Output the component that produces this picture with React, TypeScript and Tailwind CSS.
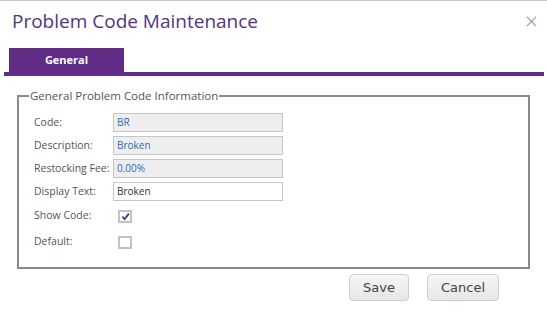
import React from 'react';

const FONT = { fontFamily: '"Open Sans", "Noto Sans", Arial, sans-serif' };

type Field = { label: string; value: string; readOnly: boolean };

const FIELDS: Field[] = [
  { label: 'Code:', value: 'BR', readOnly: true },
  { label: 'Description:', value: 'Broken', readOnly: true },
  { label: 'Restocking Fee:', value: '0.00%', readOnly: true },
  { label: 'Display Text:', value: 'Broken', readOnly: false },
];

function Checkbox({ checked }: { checked: boolean }) {
  return (
    <span className="ml-[5px] flex h-[13px] w-[14px] items-center justify-center border-2 border-[#c2c2c2] bg-white">
      {checked && (
        <svg viewBox="0 0 10 10" className="h-[9px] w-[9px]">
          <path d="M1.5 5.2 L4 7.8 L8.8 1.8" fill="none" stroke="#612c85" strokeWidth="2" />
        </svg>
      )}
    </span>
  );
}

export default function App() {
  return (
    <div className="h-[328px] w-[547px] overflow-hidden border-t border-[#c8c8c8] bg-white" style={FONT}>
      {/* Header */}
      <div className="flex h-[39px] items-center justify-between pl-3 pr-[10px]">
        <h1 className="text-[19px] leading-[28px] text-[#553382]">Problem Code Maintenance</h1>
        <svg viewBox="0 0 12 12" className="mt-[2px] h-[11px] w-[11px]">
          <path d="M1 1 L11 11 M11 1 L1 11" stroke="#9a9a9a" strokeWidth="1.3" />
        </svg>
      </div>

      {/* Tabs */}
      <div className="ml-[4px] mr-[3px] mt-[8px] flex border-b-4 border-[#612c85]">
        <div className="ml-[5px] flex h-[24px] w-[115px] items-center justify-center bg-[#612c85] text-[11px] font-bold text-white">
          General
        </div>
      </div>

      {/* Fieldset */}
      <fieldset className="ml-[17px] mt-[12px] w-[513px] border-2 border-[#8a8a8a] px-[10px] pb-[14px] pt-[9px]">
        <legend className="px-px text-[11.5px] leading-[16px] text-[#555]">General Problem Code Information</legend>
        <div className="flex flex-col gap-[4px] pl-[5px]">
          {FIELDS.map((f) => (
            <div key={f.label} className="flex h-[19px] items-center">
              <span className="w-[79px] whitespace-nowrap text-[10.5px] text-[#555]">{f.label}</span>
              <div
                className={`flex h-[19px] w-[170px] items-center border border-[#c6c6c6] px-[3px] text-[10px] ${
                  f.readOnly ? 'bg-[#eeeeee] text-[#2a6cb8]' : 'bg-white text-[#333]'
                }`}
              >
                {f.value}
              </div>
            </div>
          ))}
          <div className="flex h-[22px] items-center">
            <span className="w-[79px] whitespace-nowrap text-[10.5px] text-[#555]">Show Code:</span>
            <Checkbox checked />
          </div>
          <div className="flex h-[22px] items-center">
            <span className="w-[79px] whitespace-nowrap text-[10.5px] text-[#555]">Default:</span>
            <Checkbox checked={false} />
          </div>
        </div>
      </fieldset>

      {/* Buttons */}
      <div className="mr-[48px] mt-[5px] flex justify-end gap-[18px]" style={{ fontFamily: '"DejaVu Sans", Verdana, sans-serif' }}>
        <button className="h-[27px] w-[60px] rounded-[4px] border border-[#cfcfcf] bg-gradient-to-b from-[#f7f7f7] to-[#e6e6e6] text-[13px] text-[#444]">
          Save
        </button>
        <button className="h-[27px] w-[72px] rounded-[4px] border border-[#cfcfcf] bg-gradient-to-b from-[#f7f7f7] to-[#e6e6e6] text-[13px] text-[#444]">
          Cancel
        </button>
      </div>
    </div>
  );
}
